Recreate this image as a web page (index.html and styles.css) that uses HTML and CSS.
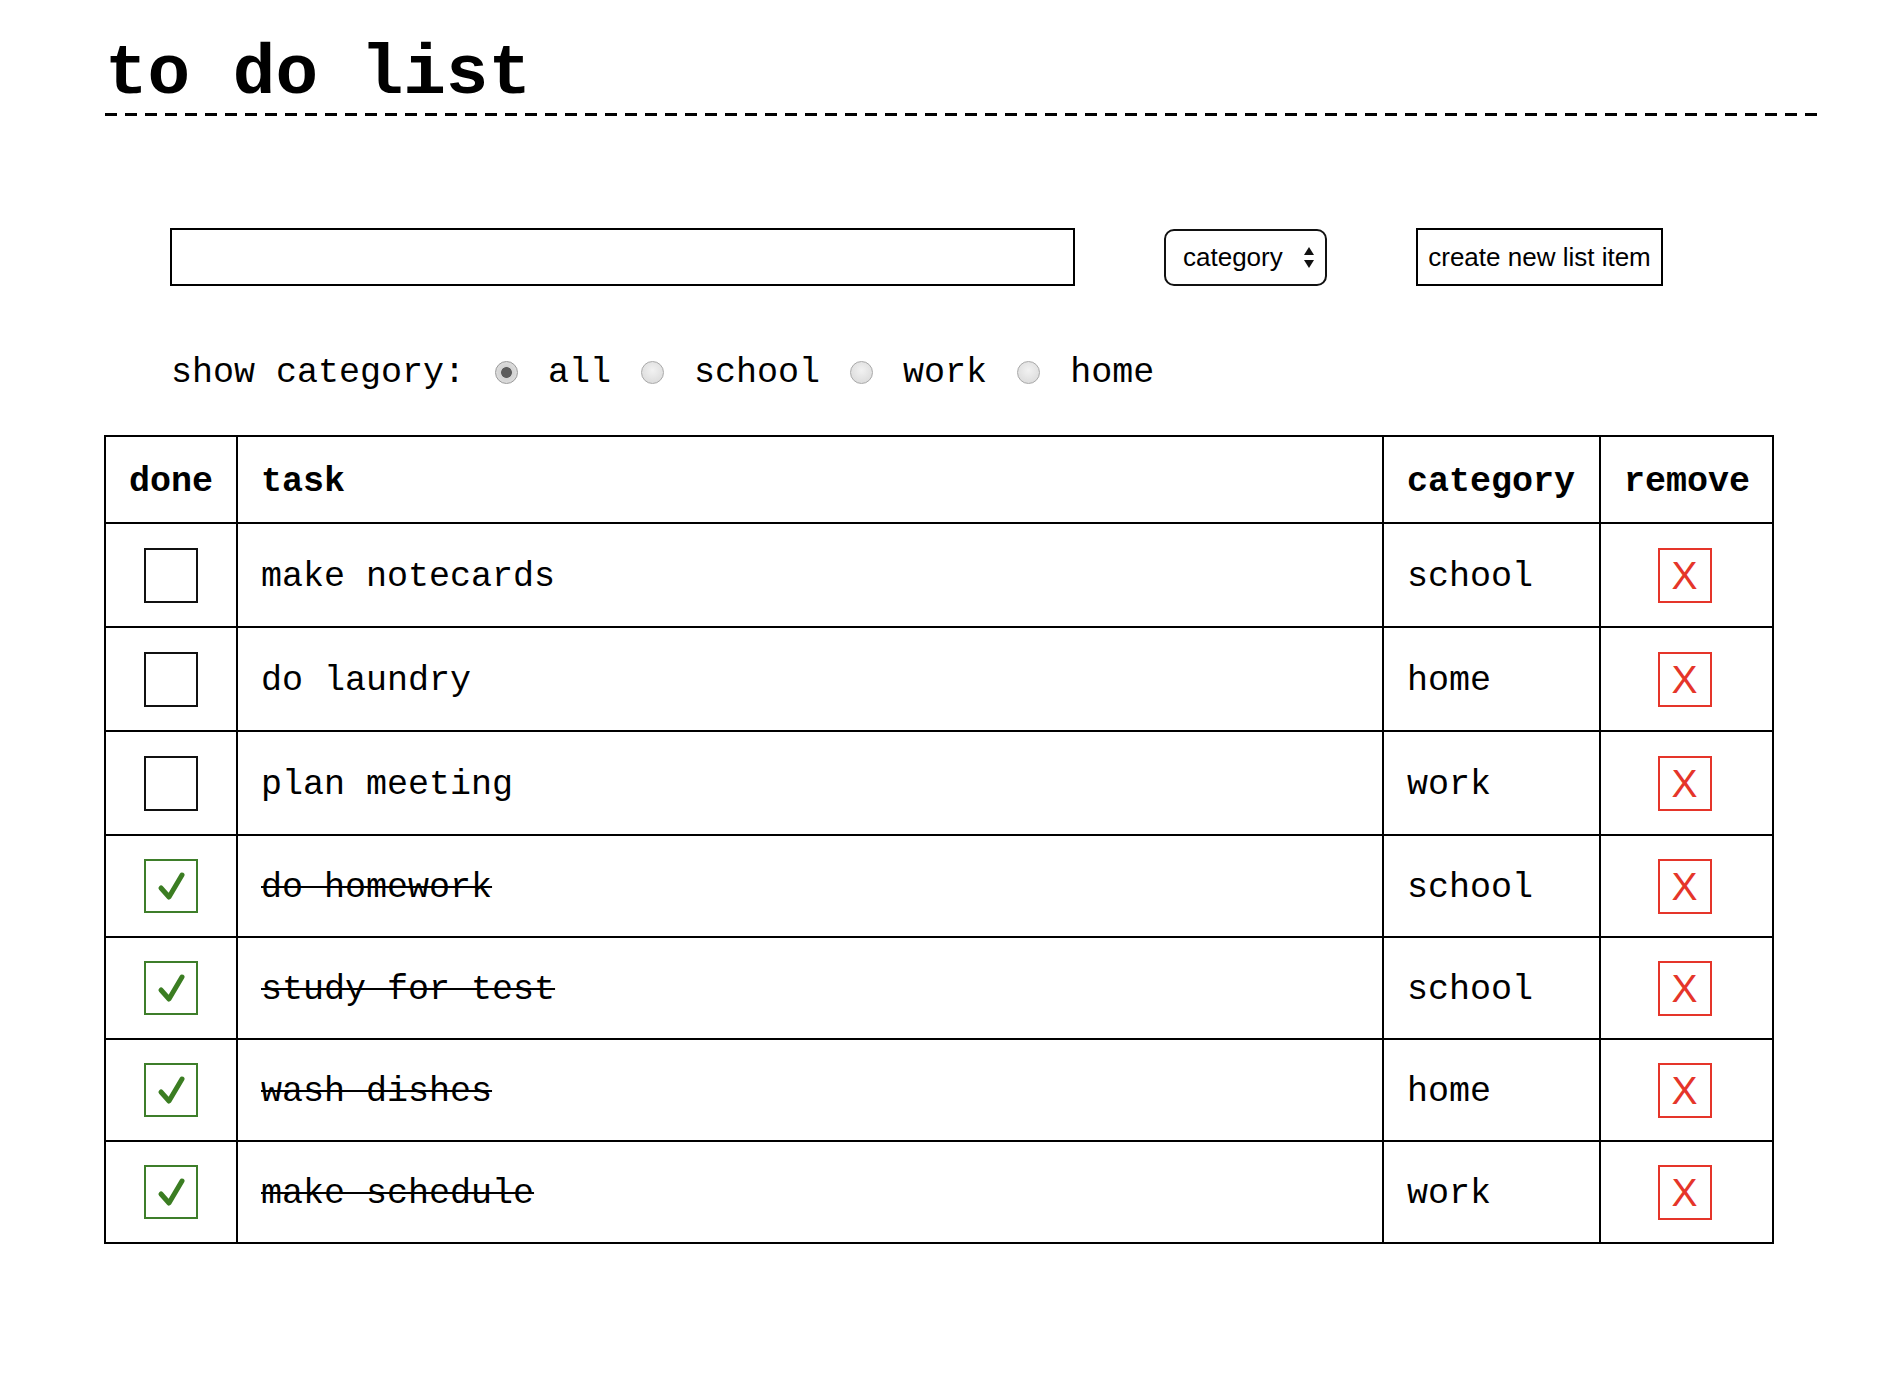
FILE: index.html
```html
<!DOCTYPE html>
<html>
<head>
<meta charset="utf-8">
<title>to do list</title>
<link rel="stylesheet" href="styles.css">
</head>
<body>
<div class="page">
  <h1 class="title">to do list</h1>
  <div class="rule"></div>

  <form class="new-item">
    <input class="task-input" type="text">
    <div class="select-wrap">
      <select class="cat-select">
        <option>category</option>
        <option>school</option>
        <option>work</option>
        <option>home</option>
      </select>
      <svg class="select-arrows" width="12" height="22" viewBox="0 0 12 22">
        <polygon points="6,0 11,8 1,8" fill="#111"/>
        <polygon points="1,13 11,13 6,21" fill="#111"/>
      </svg>
    </div>
    <button class="create-btn" type="button">create new list item</button>
  </form>

  <div class="filter">
    <span class="filter-label">show category:</span>
    <input class="radio" type="radio" name="cat" checked>
    <span class="filter-opt">all</span>
    <input class="radio" type="radio" name="cat">
    <span class="filter-opt">school</span>
    <input class="radio" type="radio" name="cat">
    <span class="filter-opt">work</span>
    <input class="radio" type="radio" name="cat">
    <span class="filter-opt">home</span>
  </div>

  <table class="todo">
    <colgroup>
      <col class="c-done">
      <col class="c-task">
      <col class="c-cat">
      <col class="c-remove">
    </colgroup>
    <thead>
      <tr class="head-row">
        <th>done</th>
        <th>task</th>
        <th>category</th>
        <th>remove</th>
      </tr>
    </thead>
    <tbody>
      <tr class="item">
        <td class="cell-center"><span class="box"></span></td>
        <td>make notecards</td>
        <td>school</td>
        <td class="cell-center"><span class="remove">X</span></td>
      </tr>
      <tr class="item">
        <td class="cell-center"><span class="box"></span></td>
        <td>do laundry</td>
        <td>home</td>
        <td class="cell-center"><span class="remove">X</span></td>
      </tr>
      <tr class="item">
        <td class="cell-center"><span class="box"></span></td>
        <td>plan meeting</td>
        <td>work</td>
        <td class="cell-center"><span class="remove">X</span></td>
      </tr>
      <tr class="item is-done">
        <td class="cell-center"><span class="box box-checked"><svg class="check" viewBox="0 0 50 50" width="50" height="50"><polyline points="15,27 23,36 36,14" fill="none" stroke="#3b7d22" stroke-width="5" stroke-linecap="round" stroke-linejoin="round"/></svg></span></td>
        <td><span class="struck">do homework</span></td>
        <td>school</td>
        <td class="cell-center"><span class="remove">X</span></td>
      </tr>
      <tr class="item is-done">
        <td class="cell-center"><span class="box box-checked"><svg class="check" viewBox="0 0 50 50" width="50" height="50"><polyline points="15,27 23,36 36,14" fill="none" stroke="#3b7d22" stroke-width="5" stroke-linecap="round" stroke-linejoin="round"/></svg></span></td>
        <td><span class="struck">study for test</span></td>
        <td>school</td>
        <td class="cell-center"><span class="remove">X</span></td>
      </tr>
      <tr class="item is-done">
        <td class="cell-center"><span class="box box-checked"><svg class="check" viewBox="0 0 50 50" width="50" height="50"><polyline points="15,27 23,36 36,14" fill="none" stroke="#3b7d22" stroke-width="5" stroke-linecap="round" stroke-linejoin="round"/></svg></span></td>
        <td><span class="struck">wash dishes</span></td>
        <td>home</td>
        <td class="cell-center"><span class="remove">X</span></td>
      </tr>
      <tr class="item is-done">
        <td class="cell-center"><span class="box box-checked"><svg class="check" viewBox="0 0 50 50" width="50" height="50"><polyline points="15,27 23,36 36,14" fill="none" stroke="#3b7d22" stroke-width="5" stroke-linecap="round" stroke-linejoin="round"/></svg></span></td>
        <td><span class="struck">make schedule</span></td>
        <td>work</td>
        <td class="cell-center"><span class="remove">X</span></td>
      </tr>
    </tbody>
  </table>
</div>
</body>
</html>
```

FILE: styles.css
```css
html, body {
  margin: 0;
  padding: 0;
  background: #fff;
  color: #000;
}

body {
  font-family: "Liberation Mono", "Courier New", monospace;
}

.page {
  padding: 39px 0 0 105px;
}

.title {
  margin: 0;
  font-family: "Liberation Mono", "Courier New", monospace;
  font-weight: bold;
  font-size: 71px;
  line-height: 71px;
  letter-spacing: 0;
}

.rule {
  margin-top: 3px;
  width: 1717px;
  height: 3px;
  background: repeating-linear-gradient(90deg, #000 0 12px, transparent 12px 20px);
}

.new-item {
  display: flex;
  align-items: center;
  margin: 112px 0 0 65px;
  height: 58px;
}

.task-input {
  box-sizing: border-box;
  width: 905px;
  height: 58px;
  border: 2px solid #000;
  border-radius: 0;
  padding: 0 12px;
  margin: 0;
  font-family: "Liberation Sans", Arial, sans-serif;
  font-size: 26px;
  outline: none;
  background: #fff;
}

.select-wrap {
  position: relative;
  margin-left: 89px;
  width: 163px;
  height: 57px;
}

.cat-select {
  appearance: none;
  -webkit-appearance: none;
  box-sizing: border-box;
  width: 163px;
  height: 57px;
  border: 2px solid #111;
  border-radius: 10px;
  background: #fff;
  color: #000;
  padding: 0 0 0 17px;
  margin: 0;
  font-family: "Liberation Sans", Arial, sans-serif;
  font-size: 26px;
  outline: none;
}

.select-arrows {
  position: absolute;
  left: 139px;
  top: 18px;
  pointer-events: none;
}

.create-btn {
  box-sizing: border-box;
  margin-left: 89px;
  width: 247px;
  height: 58px;
  border: 2px solid #000;
  border-radius: 0;
  background: #fff;
  color: #000;
  padding: 0;
  font-family: "Liberation Sans", Arial, sans-serif;
  font-size: 26px;
}

.filter {
  display: flex;
  align-items: center;
  gap: 30px;
  margin: 58px 0 0 66px;
  height: 56px;
  font-size: 35px;
}

.filter-label,
.filter-opt {
  line-height: 40px;
  padding-top: 2px;
}

.radio {
  appearance: none;
  -webkit-appearance: none;
  box-sizing: border-box;
  width: 23px;
  height: 23px;
  margin: 0;
  border: 1.5px solid #a9a9a9;
  border-radius: 50%;
  background: radial-gradient(circle at 50% 40%, #f2f2f2 0, #d6d6d6 100%);
}

.radio:checked {
  background: radial-gradient(circle, #5c5c5c 0 5px, #d3d3d3 5.8px, #e4e4e4 100%);
  border-color: #9a9a9a;
}

.todo {
  margin: 35px 0 0 -1px;
  border-collapse: collapse;
  table-layout: fixed;
  width: 1668px;
  font-size: 35px;
}

.c-done { width: 132px; }
.c-task { width: 1146px; }
.c-cat { width: 217px; }
.c-remove { width: 173px; }

.todo th,
.todo td {
  border: 2px solid #000;
  padding: 4px 0 0 23px;
  text-align: left;
  vertical-align: middle;
  white-space: nowrap;
}

.todo th {
  font-weight: bold;
}

.head-row { height: 87px; }
.item { height: 104px; }
.item.is-done { height: 102px; }

.todo td.cell-center {
  text-align: center;
  padding: 0;
}

.box {
  display: inline-block;
  box-sizing: border-box;
  width: 54px;
  height: 55px;
  border: 2px solid #111;
  vertical-align: middle;
  margin-left: -1px;
}

.box-checked {
  border-color: #3e7e2a;
  height: 54px;
}

.check {
  display: block;
  width: 50px;
  height: 50px;
}

.struck {
  text-decoration: line-through;
  text-decoration-thickness: 2px;
}

.remove {
  display: inline-flex;
  align-items: center;
  justify-content: center;
  box-sizing: border-box;
  width: 54px;
  height: 55px;
  border: 2px solid #e5352a;
  color: #e5352a;
  font-family: "Liberation Sans", Arial, sans-serif;
  font-size: 39px;
  line-height: 1;
  vertical-align: middle;
  margin-left: -4px;
}
```
